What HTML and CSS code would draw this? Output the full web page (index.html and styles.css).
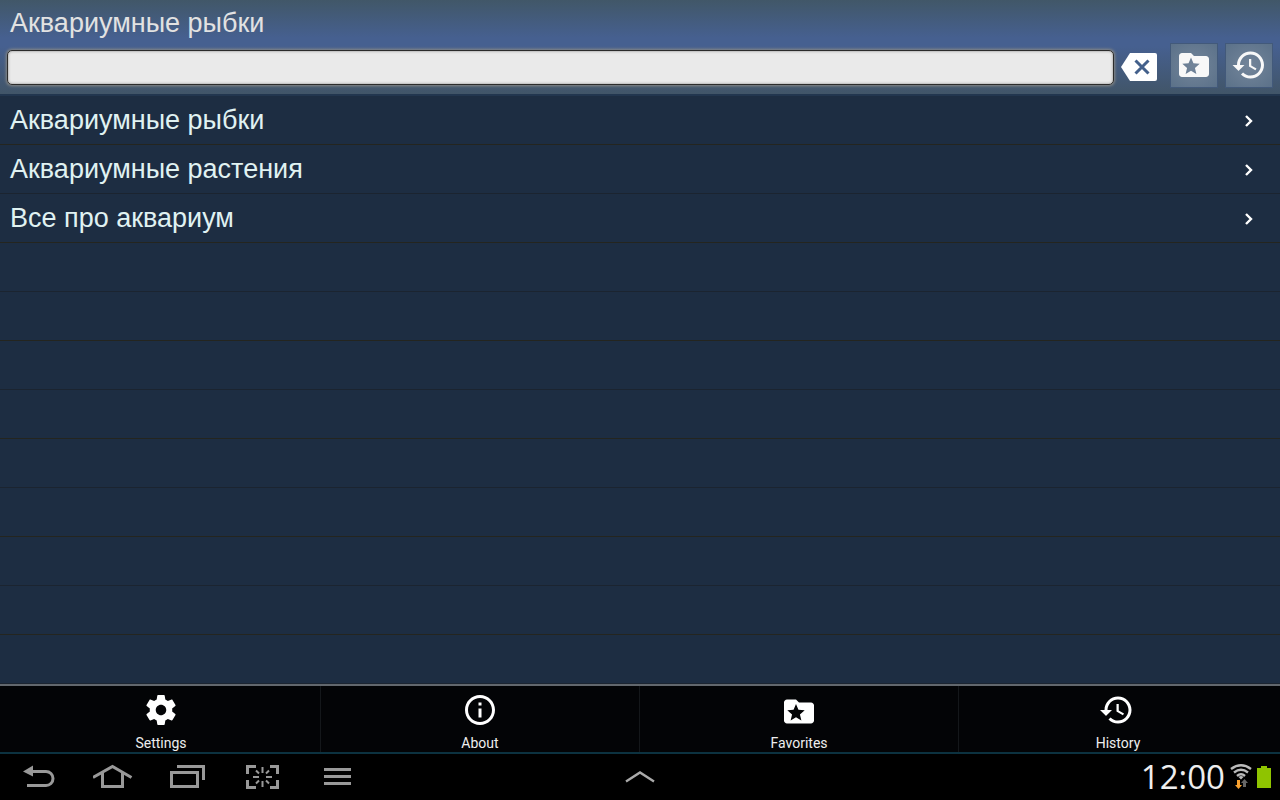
FILE: index.html
```
<!DOCTYPE html>
<html lang="ru">
   <head>
      <meta charset="utf-8">
      <title>Аквариумные рыбки</title>
      <meta name="viewport" content="width=device-width, initial-scale=1">
      <link rel="stylesheet" href="styles.css">
   </head>
   <body>
      <svg class="sprite" aria-hidden="true">
         <symbol id="folder" viewBox="0 0 24 24">
            <path d="M20 6h-8l-2-2H4c-1.1 0-1.99.9-1.99 2L2 18c0 1.1.9 2 2 2h16c1.1 0 2-.9 2-2V8c0-1.1-.9-2-2-2zm-6.42 12L10 15.9 6.42 18l.95-4.07-3.16-2.74 4.16-.36L10 7l1.63 3.84 4.16.36-3.16 2.74.95 4.06z"></path>
         </symbol>
         <symbol id="history" viewBox="0 0 24 24">
            <path d="M13 3c-4.97 0-9 4.03-9 9H1l3.89 3.89.07.14L9 12H6c0-3.87 3.13-7 7-7s7 3.13 7 7-3.13 7-7 7c-1.93 0-3.68-.79-4.94-2.06l-1.42 1.42C8.27 19.99 10.51 21 13 21c4.97 0 9-4.03 9-9s-4.03-9-9-9zm-1 5v5l4.28 2.54.72-1.21-3.5-2.08V8H12z"></path>
         </symbol>
         <symbol id="chevron" viewBox="0 0 10 14">
            <path d="M2 2l5 5-5 5" fill="none" stroke="#fff" stroke-width="2.4"></path>
         </symbol>
      </svg>
      <header>
         <h1>Аквариумные рыбки</h1>
         <form class="search">
            <input class="query" type="text" aria-label="Поиск">
            <button class="clear" type="reset" aria-label="Clear">
               <svg width="36" height="28" viewBox="0 0 36 28">
                  <path d="M9 0H34q2 0 2 2v24q0 2-2 2H9L0 14z" fill="#fff"></path>
                  <path d="M14.500 7.500l13 13m0-13l-13 13" stroke="#43608b" stroke-width="3"></path>
               </svg>
            </button>
            <button class="tool" type="button" aria-label="Favorites"><svg class="icon"><use href="#folder"></use></svg></button>
            <button class="tool" type="button" aria-label="History"><svg class="icon"><use href="#history"></use></svg></button>
         </form>
      </header>
      <main>
         <ul class="list">
            <li><a href="#fish">Аквариумные рыбки <svg class="chevron"><use href="#chevron"></use></svg></a></li>
            <li><a href="#plants">Аквариумные растения <svg class="chevron"><use href="#chevron"></use></svg></a></li>
            <li><a href="#all">Все про аквариум <svg class="chevron"><use href="#chevron"></use></svg></a></li>
         </ul>
      </main>
      <div class="menu">
         <button type="button">
            <svg class="icon" viewBox="0 0 24 24"><path d="M19.430 12.980c.04-.32.07-.64.07-.98s-.03-.66-.07-.98l2.110-1.650c.19-.15.24-.42.12-.64l-2-3.460c-.12-.22-.39-.3-.61-.22l-2.490 1c-.52-.4-1.080-.73-1.690-.98l-.38-2.650C14.460 2.180 14.250 2 14 2h-4c-.25 0-.46.18-.49.42l-.38 2.650c-.61.25-1.170.59-1.690.98l-2.490-1c-.23-.09-.49 0-.61.22l-2 3.460c-.13.22-.07.49.12.64l2.110 1.650c-.04.32-.07.65-.07.98s.03.66.07.98l-2.110 1.650c-.19.15-.24.42-.12.64l2 3.460c.12.22.39.3.61.22l2.490-1c.52.4 1.080.73 1.690.98l.38 2.650c.03.24.24.42.49.42h4c.25 0 .46-.18.49-.42l.38-2.650c.61-.25 1.170-.59 1.690-.98l2.490 1c.23.09.49 0 .61-.22l2-3.460c.12-.22.07-.49-.12-.64l-2.110-1.650zM12 15.500c-1.930 0-3.500-1.570-3.500-3.500s1.570-3.500 3.500-3.500 3.500 1.570 3.500 3.500-1.570 3.500-3.500 3.500z"></path></svg>
            <span>Settings</span>
         </button>
         <button type="button">
            <svg class="icon" viewBox="0 0 24 24"><path d="M11 17h2v-6h-2v6zm1-15C6.480 2 2 6.480 2 12s4.480 10 10 10 10-4.480 10-10S17.520 2 12 2zm0 18c-4.410 0-8-3.590-8-8s3.590-8 8-8 8 3.590 8 8-3.590 8-8 8zM11 9h2V7h-2v2z"></path></svg>
            <span>About</span>
         </button>
         <button type="button">
            <svg class="icon" viewBox="0 -1 24 24"><use href="#folder" width="24" height="24"></use></svg>
            <span>Favorites</span>
         </button>
         <button type="button">
            <svg class="icon" viewBox="1 0 24 24"><use href="#history" width="24" height="24"></use></svg>
            <span>History</span>
         </button>
      </div>
      <footer>
         <div class="keys">
            <button type="button" aria-label="Back">
               <svg width="40" height="28" viewBox="0 0 40 28"><path d="M13 8.500h15a7 7 0 0 1 0 14H9" fill="none" stroke="#999" stroke-width="3"></path><path d="M5 8.500l10-6v11z" fill="#999"></path></svg>
            </button>
            <button type="button" aria-label="Home">
               <svg width="40" height="28" viewBox="0 0 40 28"><path d="M0 14.500L19.500 3.500l19 11M9.500 10v13.500h20V10" fill="none" stroke="#999" stroke-width="3"></path></svg>
            </button>
            <button type="button" aria-label="Recent apps">
               <svg width="40" height="28" viewBox="0 0 40 28"><path d="M3.500 9.500h26v14h-26zM9 3.500h26.500V17" fill="none" stroke="#999" stroke-width="3"></path></svg>
            </button>
            <button type="button" aria-label="Screenshot">
               <svg width="40" height="28" viewBox="0 0 40 28"><path d="M4.500 11V3.500H13M27 3.500h7.500V11M34.500 17v7.500H27M13 24.500H4.500V17" fill="none" stroke="#999" stroke-width="3"></path><path d="M19.500 4v6M19.500 18v6M10 14h6M23 14h6M13 7.500l3 3M26 7.500l-3 3M13 20.500l3-3M26 20.500l-3-3" fill="none" stroke="#999" stroke-width="2"></path></svg>
            </button>
            <button type="button" aria-label="Menu">
               <svg width="40" height="28" viewBox="0 0 40 28"><path d="M6 6.500h27M6 13.500h27M6 20.500h27" stroke="#999" stroke-width="3"></path></svg>
            </button>
         </div>
         <button class="up" type="button" aria-label="Show tray">
            <svg width="32" height="14" viewBox="0 0 32 14"><path d="M2 11.500l14-9 14 9" fill="none" stroke="#aaa" stroke-width="2.400"></path></svg>
         </button>
         <div class="status">
            <time>12:00</time>
            <svg width="22" height="26" viewBox="0 0 22 26">
               <path d="M1 5q10-7.500 20 0M4 8.500q7-5.500 14 0M7 12q4-3.500 8 0" fill="none" stroke="#bbb" stroke-width="2.400"></path>
               <path d="M8.500 13q2.500-2 5 0L11 15.500z" fill="#bbb"></path>
               <path d="M7 16h3v5h2l-3.500 4L5 21h2z" fill="#f9a12e"></path>
               <path d="M13 23v-4h-2l3.500-4 3.500 4h-2v4z" fill="#666"></path>
            </svg>
            <svg width="14" height="22" viewBox="0 0 14 22"><path d="M0 2h4V0h6v2h4v20H0z" fill="#8fc400"></path></svg>
         </div>
      </footer>
   </body>
</html>
```
FILE: styles.css
```
*{
   box-sizing: border-box;
}
body{
    display: flex;
    flex-direction: column;
    min-height: 100vh;
    margin: 0;
    background: #000;
    font-family: "Liberation Sans", Arial, sans-serif;
}
button{
    padding: 0;
    border: 0;
    background: none;
    font: inherit;
    cursor: pointer;
}
svg{
    display: block;
    flex: none;
}
.sprite{
    position: absolute;
    width: 0;
    height: 0;
}
.icon{
    width: 36px;
    height: 36px;
    fill: #fff;
}
header{
    height: 96px;
    border-bottom: 2px solid #22364f;
    background: linear-gradient(#415768, #466090 38px, #466090 46px, #415568);
}
h1{
    margin: 0;
    padding: 8px 10px 0;
    height: 43px;
    color: #e2e2e2;
    font-size: 27px;
    font-weight: 400;
    line-height: 30px;
}
.search{
    display: flex;
    align-items: center;
    gap: 7px;
    padding: 0 7px;
}
.query{
    flex: 1;
    min-width: 0;
    height: 35px;
    margin-top: 4px;
    padding: 0 8px;
    border: 1px solid #2c2c2c;
    border-radius: 5px;
    outline: 0;
    background: #eaeaea;
    box-shadow: 0 0 3px 1px #8a8a86, inset 0 0 3px #888;
    font-size: 22px;
}
.clear{
    margin: 2px 6px 0 0;
}
.tool{
    display: flex;
    align-items: center;
    justify-content: center;
    width: 48px;
    height: 45px;
    padding-bottom: 2px;
    border: 1px solid #42597a;
    background: radial-gradient(#73859a, #5b7189);
}
.tool .icon{
    fill: #f8f8f8;
}
main{
    flex: 1;
    background: repeating-linear-gradient(#1d2d42 0 48px, #24251f 48px 49px, #1d2d42 49px 97px, #1b2430 97px 98px);
}
.list{
    margin: 0;
    padding: 0;
    list-style: none;
}
.list a{
    display: flex;
    align-items: center;
    justify-content: space-between;
    height: 49px;
    padding: 0 26px 0 10px;
    color: #e0f2f2;
    font-size: 27px;
    text-decoration: none;
}
.chevron{
    width: 10px;
    height: 14px;
}
.menu{
    display: flex;
    height: 70px;
    padding: 0 2px;
    border-top: 2px solid #62676d;
    border-bottom: 2px solid #0c3240;
    background: #030406;
}
.menu button{
    display: flex;
    flex: 1;
    flex-direction: column;
    align-items: center;
    gap: 6px;
    padding-top: 6px;
    border-right: 1px solid #14171a;
    color: #eee;
    font: 14px/18px Roboto, sans-serif;
}
.menu button:last-child{
    border-color: transparent;
}
footer{
    display: grid;
    grid-template-columns: 1fr auto 1fr;
    align-items: center;
    height: 46px;
    padding: 0 9px 0 18px;
}
.keys{
    display: flex;
    gap: 35px;
}
.up{
    margin-right: 10px;
}
.status{
    display: flex;
    align-items: center;
    justify-content: flex-end;
    gap: 5px;
    color: #eee;
}
.status time{
    font: 33px/44px "Open Sans", sans-serif;
}
```
